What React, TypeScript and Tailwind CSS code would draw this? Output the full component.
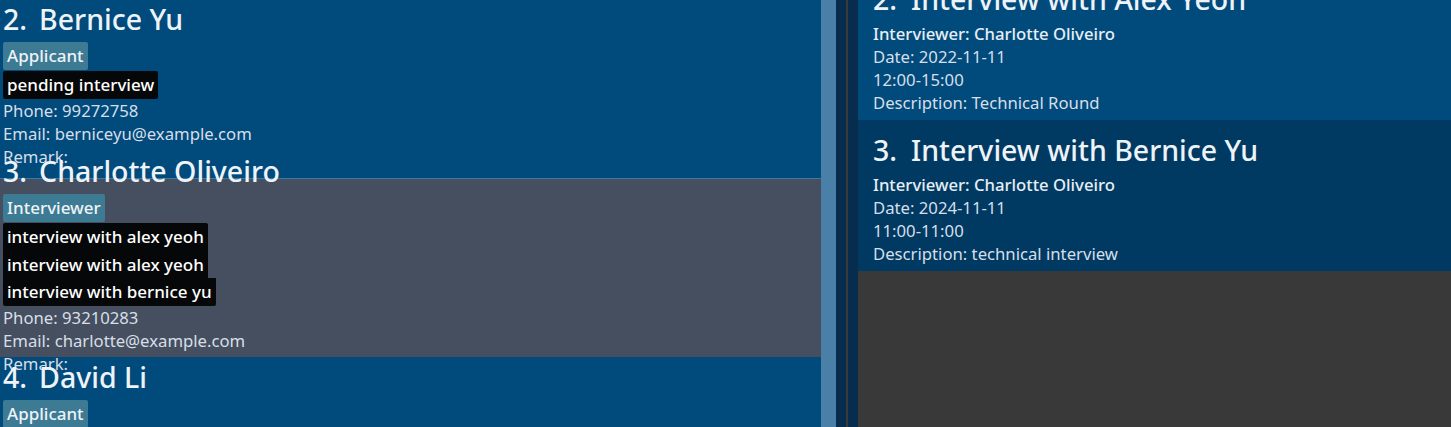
import React from 'react';

const font = { fontFamily: '"Noto Sans", "Open Sans", sans-serif' };

type Person = {
  idx: number;
  name: string;
  role: string;
  tags: string[];
  phone: string;
  email: string;
  selected?: boolean;
};

const people: Person[] = [
  { idx: 2, name: 'Bernice Yu', role: 'Applicant', tags: ['pending interview'], phone: '99272758', email: 'berniceyu@example.com' },
  {
    idx: 3,
    name: 'Charlotte Oliveiro',
    role: 'Interviewer',
    tags: ['interview with alex yeoh', 'interview with alex yeoh', 'interview with bernice yu'],
    phone: '93210283',
    email: 'charlotte@example.com',
    selected: true,
  },
  { idx: 4, name: 'David Li', role: 'Applicant', tags: ['pending interview'], phone: '91031282', email: 'lidavid@example.com' },
];

const interviews = [
  { idx: 2, title: 'Interview with Alex Yeoh', who: 'Charlotte Oliveiro', date: '2022-11-11', time: '12:00-15:00', desc: 'Technical Round', bg: 'bg-[#014a7c]' },
  { idx: 3, title: 'Interview with Bernice Yu', who: 'Charlotte Oliveiro', date: '2024-11-11', time: '11:00-11:00', desc: 'technical interview', bg: 'bg-[#003a63]' },
];

function PersonCard({ p }: { p: Person }) {
  return (
    <div
      className={
        'h-[179px] flex flex-col justify-center pb-[8px] pl-[3px] ' +
        (p.selected ? 'bg-[#464f5f] border-t border-[#3b7aa3]' : 'bg-[#014a7c]')
      }
    >
      <div className="flex items-center h-[36px] text-[28.5px] leading-[36px] font-medium text-[#eef3f8] shrink-0">
        <span>{p.idx}.</span>
        <span className="ml-[12px]">{p.name}</span>
      </div>
      <div className="mt-[5px] flex shrink-0">
        <span className="h-[28px] px-[4px] rounded-[2px] bg-[#3d7a93] text-[17px] leading-[28px] font-medium text-[#eef3f8]">
          {p.role}
        </span>
      </div>
      <div className="mt-[1px] flex flex-col items-start shrink-0">
        {p.tags.map((t, i) => (
          <span
            key={i}
            className="h-[27.7px] px-[4px] bg-[#060708] text-[17px] leading-[27px] font-medium text-white first:rounded-t-[2px] last:rounded-b-[2px]"
          >
            {t}
          </span>
        ))}
      </div>
      <div className="text-[16.7px] leading-[23px] text-[#d6dfe8] shrink-0">
        <div>Phone: {p.phone}</div>
        <div>Email: {p.email}</div>
        <div>Remark:</div>
      </div>
    </div>
  );
}

export default function App() {
  return (
    <div className="w-[1451px] h-[427px] overflow-hidden flex bg-[#393939]" style={font}>
      <div className="w-[821px] h-full overflow-hidden bg-[#014a7c]">
        <div className="-mt-[1px]">
          {people.map((p) => (
            <PersonCard key={p.idx} p={p} />
          ))}
        </div>
      </div>
      <div className="w-[15px] h-full bg-[#4a80a7]" />
      <div className="w-[10px] h-full bg-[#072c4d]" />
      <div className="w-[2px] h-full bg-[#3a3a3a]" />
      <div className="w-[10px] h-full bg-[#072c4d]" />
      <div className="flex-1 h-full overflow-hidden bg-[#393939]">
        <div className="-mt-[31px]">
          {interviews.map((iv) => (
            <div key={iv.idx} className={'h-[151px] pl-[15px] pt-[8px] ' + iv.bg}>
              <div className="flex items-center h-[45px] text-[28.5px] leading-[45px] font-medium text-[#eef3f8]">
                <span>{iv.idx}.</span>
                <span className="ml-[14px]">{iv.title}</span>
              </div>
              <div className="text-[16.7px] leading-[23px] text-[#d6dfe8]">
                <div className="font-medium text-[#e8eef4]">Interviewer: {iv.who}</div>
                <div>Date: {iv.date}</div>
                <div>{iv.time}</div>
                <div>Description: {iv.desc}</div>
              </div>
            </div>
          ))}
        </div>
      </div>
    </div>
  );
}
